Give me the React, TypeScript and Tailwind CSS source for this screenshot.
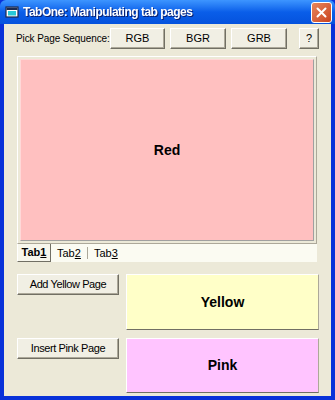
import React from "react"

const font = { fontFamily: '"Liberation Sans", Arial, sans-serif' }

function Btn({ label, className = "" }: { label: React.ReactNode; className?: string }) {
  return (
    <div
      className={`flex items-center justify-center bg-[#f1efe4] border border-t-white border-l-white border-r-[#716f64] border-b-[#716f64] shadow-[inset_-1px_-1px_0_#aca899] text-[11px] text-black whitespace-nowrap ${className}`}
    >
      {label}
    </div>
  )
}

function Panel({ label, color, className = "" }: { label: string; color: string; className?: string }) {
  return (
    <div
      className={`flex items-center justify-center border border-t-white border-l-white border-r-[#aca899] border-b-[#716f64] text-[14px] font-bold text-black ${color} ${className}`}
    >
      {label}
    </div>
  )
}

export default function App() {
  return (
    <div className="w-[335px] h-[400px] flex flex-col bg-[#0831d9] select-none" style={font}>
      {/* title bar */}
      <div className="h-[24px] flex items-center pl-[5px] pr-[3px] bg-gradient-to-b from-[#3d95ff] via-[#0a5ee9] to-[#0552dd] rounded-t-[6px]">
        <svg width="14" height="14" viewBox="0 0 14 14" className="mr-[4px]">
          <rect x="1" y="2" width="12" height="10" fill="#ffffff" stroke="#1c2b50" strokeWidth="1.2" />
          <rect x="1.5" y="2.5" width="11" height="2.5" fill="#1c2b50" />
          <rect x="3" y="6" width="8" height="4.5" fill="#28c8d8" />
        </svg>
        <span className="text-white font-bold text-[12px] tracking-[-0.5px] whitespace-nowrap drop-shadow-[1px_1px_0_#0a1f6e]">
          TabOne: Manipulating tab pages
        </span>
        <div className="ml-auto w-[21px] h-[21px] rounded-[3px] border border-white bg-gradient-to-br from-[#e8865c] to-[#c9411c] flex items-center justify-center">
          <svg width="11" height="11" viewBox="0 0 11 11">
            <path d="M1.5 1.5 L9.5 9.5 M9.5 1.5 L1.5 9.5" stroke="white" strokeWidth="2" strokeLinecap="round" />
          </svg>
        </div>
      </div>

      {/* client area */}
      <div className="flex-1 mx-[4px] mb-[4px] bg-[#ece9d8] flex flex-col">
        <div className="flex items-center mt-[4px] h-[21px]">
          <span className="ml-[12px] w-[94px] text-[10px] tracking-[-0.1px] text-black whitespace-nowrap">
            Pick Page Sequence:
          </span>
          <Btn label="RGB" className="w-[55px] h-[21px]" />
          <Btn label="BGR" className="w-[56px] h-[21px] ml-[5px]" />
          <Btn label="GRB" className="w-[56px] h-[21px] ml-[5px]" />
          <Btn label="?" className="w-[20px] h-[21px] ml-[12px]" />
        </div>

        {/* tab control */}
        <div className="ml-[13px] mt-[7px] w-[300px] flex flex-col">
          <div className="h-[188px] border border-t-white border-l-white border-r-[#aca899] border-b-[#aca899] p-[2px]">
            <div className="w-full h-full bg-[#ffc0c0] border border-b-[#a0a0a0] border-r-[#a0a0a0] border-t-[#ffd8d8] border-l-[#ffd8d8] flex items-center justify-center text-[14px] font-bold text-black">
              Red
            </div>
          </div>
          <div className="h-[18px] bg-[#fbfbf2] flex items-stretch text-[11px] text-black">
            <div className="w-[34px] flex items-center justify-center font-bold border-r border-b border-r-[#716f64] border-b-[#716f64] border-l border-l-white bg-[#f7f6ec]">
              Tab<span className="underline">1</span>
            </div>
            <div className="ml-[6px] flex items-center pr-[6px]">
              Tab<span className="underline">2</span>
            </div>
            <div className="my-[3px] w-px bg-[#aca899]" />
            <div className="ml-[6px] flex items-center">
              Tab<span className="underline">3</span>
            </div>
          </div>
        </div>

        {/* bottom rows */}
        <div className="flex mt-[12px] ml-[13px]">
          <Btn label="Add Yellow Page" className="w-[102px] h-[21px] tracking-[-0.4px]" />
          <Panel label="Yellow" color="bg-[#ffffc8]" className="ml-[7px] w-[193px] h-[56px]" />
        </div>
        <div className="flex mt-[8px] ml-[13px]">
          <Btn label="Insert Pink Page" className="w-[102px] h-[21px] tracking-[-0.4px]" />
          <Panel label="Pink" color="bg-[#ffc4ff]" className="ml-[7px] w-[193px] h-[55px]" />
        </div>
      </div>
    </div>
  )
}
